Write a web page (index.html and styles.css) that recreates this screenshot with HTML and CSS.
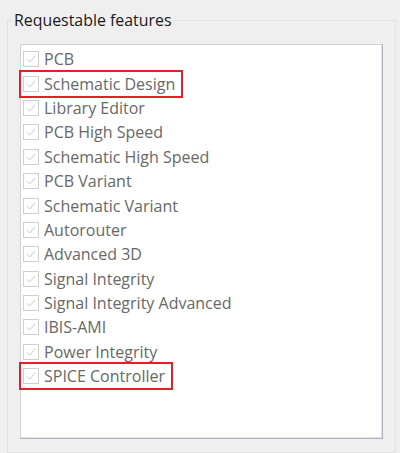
FILE: index.html
```html
<!DOCTYPE html>
<html>
<head>
<meta charset="utf-8">
<link rel="stylesheet" href="styles.css">
</head>
<body>
<fieldset class="group">
  <legend class="group-title">Requestable features</legend>
  <ul class="list">
    <li class="item"><span class="entry"><span class="check"><svg viewBox="0 0 16 16"><path d="M3.5 8.5 L6.5 11.5 L12.5 4.5"/></svg></span><span class="label">PCB</span></span></li>
    <li class="item"><span class="entry marked"><span class="check"><svg viewBox="0 0 16 16"><path d="M3.5 8.5 L6.5 11.5 L12.5 4.5"/></svg></span><span class="label">Schematic Design</span></span></li>
    <li class="item"><span class="entry"><span class="check"><svg viewBox="0 0 16 16"><path d="M3.5 8.5 L6.5 11.5 L12.5 4.5"/></svg></span><span class="label">Library Editor</span></span></li>
    <li class="item"><span class="entry"><span class="check"><svg viewBox="0 0 16 16"><path d="M3.5 8.5 L6.5 11.5 L12.5 4.5"/></svg></span><span class="label">PCB High Speed</span></span></li>
    <li class="item"><span class="entry"><span class="check"><svg viewBox="0 0 16 16"><path d="M3.5 8.5 L6.5 11.5 L12.5 4.5"/></svg></span><span class="label">Schematic High Speed</span></span></li>
    <li class="item"><span class="entry"><span class="check"><svg viewBox="0 0 16 16"><path d="M3.5 8.5 L6.5 11.5 L12.5 4.5"/></svg></span><span class="label">PCB Variant</span></span></li>
    <li class="item"><span class="entry"><span class="check"><svg viewBox="0 0 16 16"><path d="M3.5 8.5 L6.5 11.5 L12.5 4.5"/></svg></span><span class="label">Schematic Variant</span></span></li>
    <li class="item"><span class="entry"><span class="check"><svg viewBox="0 0 16 16"><path d="M3.5 8.5 L6.5 11.5 L12.5 4.5"/></svg></span><span class="label">Autorouter</span></span></li>
    <li class="item"><span class="entry"><span class="check"><svg viewBox="0 0 16 16"><path d="M3.5 8.5 L6.5 11.5 L12.5 4.5"/></svg></span><span class="label">Advanced 3D</span></span></li>
    <li class="item"><span class="entry"><span class="check"><svg viewBox="0 0 16 16"><path d="M3.5 8.5 L6.5 11.5 L12.5 4.5"/></svg></span><span class="label">Signal Integrity</span></span></li>
    <li class="item"><span class="entry"><span class="check"><svg viewBox="0 0 16 16"><path d="M3.5 8.5 L6.5 11.5 L12.5 4.5"/></svg></span><span class="label">Signal Integrity Advanced</span></span></li>
    <li class="item"><span class="entry"><span class="check"><svg viewBox="0 0 16 16"><path d="M3.5 8.5 L6.5 11.5 L12.5 4.5"/></svg></span><span class="label">IBIS-AMI</span></span></li>
    <li class="item"><span class="entry"><span class="check"><svg viewBox="0 0 16 16"><path d="M3.5 8.5 L6.5 11.5 L12.5 4.5"/></svg></span><span class="label">Power Integrity</span></span></li>
    <li class="item"><span class="entry marked"><span class="check"><svg viewBox="0 0 16 16"><path d="M3.5 8.5 L6.5 11.5 L12.5 4.5"/></svg></span><span class="label">SPICE Controller</span></span></li>
  </ul>
</fieldset>
</body>
</html>
```
FILE: styles.css
```css
html, body {
  margin: 0;
  padding: 0;
  background: #efefef;
  width: 400px;
  height: 453px;
  overflow: hidden;
}
body {
  font-family: "Open Sans", "Noto Sans", sans-serif;
  font-size: 16px;
}
.group {
  box-sizing: border-box;
  width: 389px;
  height: 443px;
  margin: 10px 0 0 7px;
  padding: 14px 12px 12px 12px;
  border: 1px solid #e2e2e2;
  min-width: 0;
}
.group-title {
  margin-left: -8px;
  padding: 0 2px;
  line-height: 20px;
  color: #1a1a1a;
  font-size: 15.9px;
}
.list {
  box-sizing: border-box;
  list-style: none;
  margin: 0;
  padding: 2px 0 0 2px;
  height: 395px;
  background: #fff;
  border-style: solid;
  border-width: 1px;
  border-color: #d2d2d2 #aeaebe #aeaebe #d2d2d2;
  box-shadow: inset -1px -1px 0 #e4e4e4;
}
.item {
  height: 24.4px;
  display: flex;
  align-items: center;
}
.entry {
  display: inline-flex;
  align-items: center;
  gap: 5px;
  padding-right: 4px;
}
.entry.marked {
  outline: 2px solid #e51f28;
  outline-offset: 2px;
}
.check {
  box-sizing: border-box;
  width: 16px;
  height: 16px;
  border: 1px solid #cfcfcf;
  background: #fff;
  display: flex;
}
.check svg {
  width: 14px;
  height: 14px;
  fill: none;
  stroke: #c6c6c6;
  stroke-width: 1.1;
}
.label {
  color: #686868;
  line-height: 20px;
}
```
